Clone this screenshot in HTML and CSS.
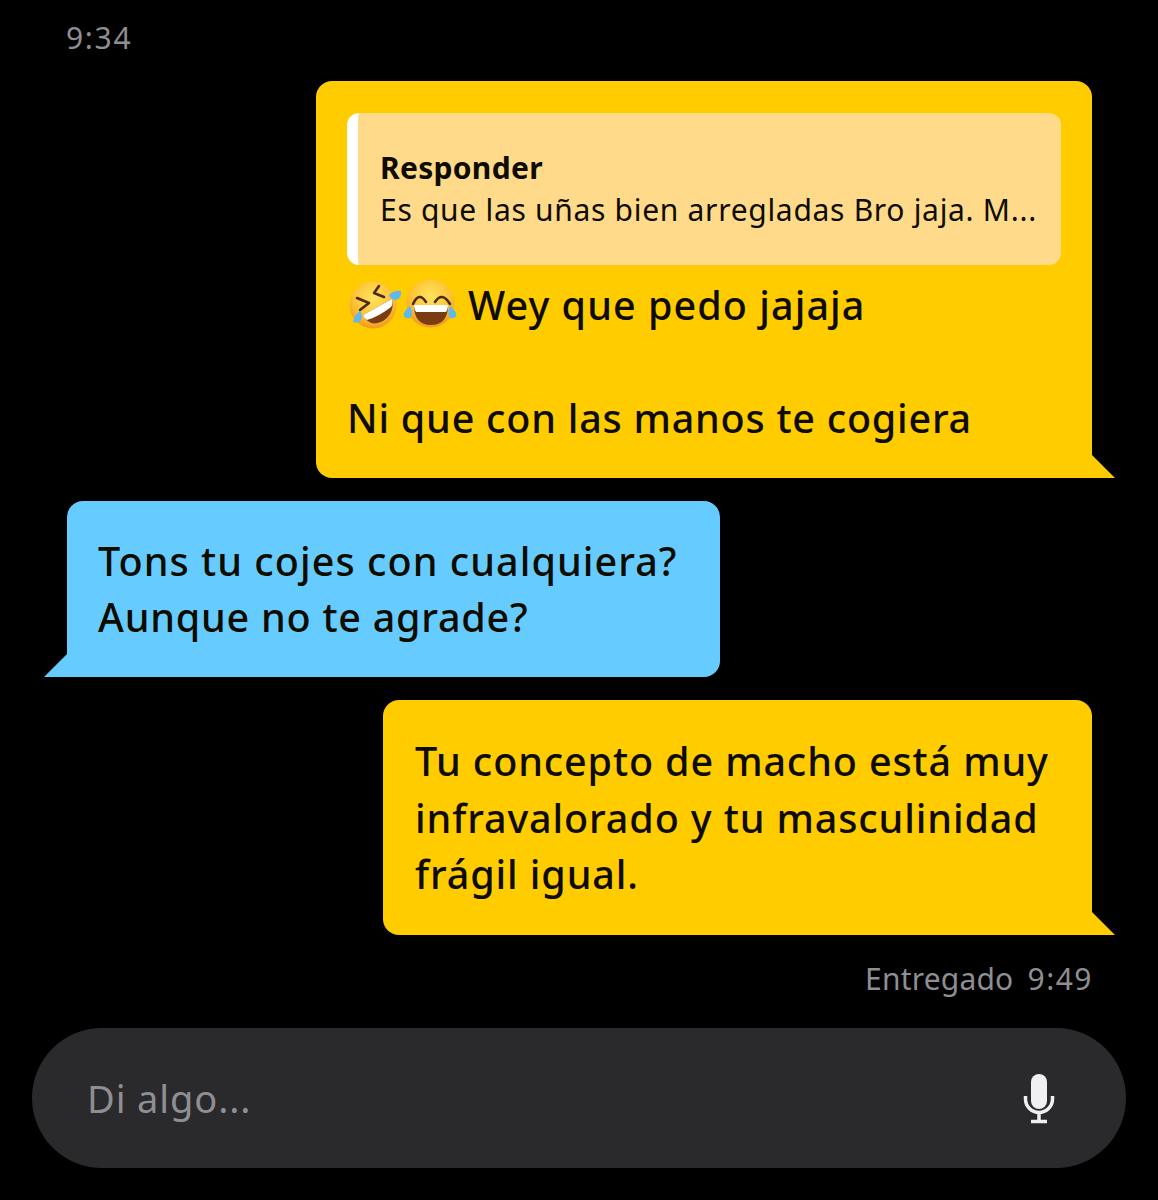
FILE: index.html
```html
<!DOCTYPE html>
<html lang="es">
<head>
    <meta charset="UTF-8">
    <meta name="viewport" content="width=device-width, initial-scale=1.0">
    <title>Chat</title>
    <link rel="stylesheet" href="styles.css">
</head>
<body>
<div id="chat">
    <div class="time-top">9:34</div>

    <div class="bubble mine first">
        <div class="quote">
            <div class="quote-title">Responder</div>
            <div class="quote-text">Es que las uñas bien arregladas Bro jaja. M...</div>
        </div>
        <div class="msg">
            <svg class="emoji" viewBox="0 0 54 54" width="54" height="54">
                <defs>
                    <radialGradient id="face" cx="50%" cy="35%" r="70%">
                        <stop offset="0" stop-color="#ffe45c"/>
                        <stop offset="0.6" stop-color="#fcc236"/>
                        <stop offset="1" stop-color="#ee8f1c"/>
                    </radialGradient>
                </defs>
                <circle cx="25" cy="26" r="23.5" fill="url(#face)"/>
                <path d="M15 36 L44 20 Q47 34 35 42 Q22 49 15 36Z" fill="#7a3d12"/>
                <path d="M15 36 L44 20 Q45 25 43 28 Q30 38 19 41 Q16 39 15 36Z" fill="#fff"/>
                <path d="M9 19 L21 24 L12 31" fill="none" stroke="#4c2a12" stroke-width="2.6" stroke-linecap="round" stroke-linejoin="round"/>
                <path d="M31 7 L26 14 L36 18" fill="none" stroke="#4c2a12" stroke-width="2.6" stroke-linecap="round" stroke-linejoin="round"/>
                <path d="M41 16 Q47 11 53 12 Q54 19 48 21 Q43 21 41 16Z" fill="#5fb8ee"/>
                <path d="M12 32 Q6 36 5 43 Q10 45 13 41 Q15 36 12 32Z" fill="#5fb8ee"/>
            </svg><svg class="emoji" viewBox="0 0 54 54" width="54" height="54">
                <circle cx="27.5" cy="24.5" r="24" fill="url(#face)"/>
                <path d="M11 26 H45 Q45 46 28 46 Q11 46 11 26Z" fill="#7a3d12"/>
                <path d="M11 26 H45 Q45 30 43 33 H13 Q11 30 11 26Z" fill="#fff"/>
                <path d="M10 25 Q16 12 23 23" fill="none" stroke="#4c2a12" stroke-width="2.6" stroke-linecap="round"/>
                <path d="M32 23 Q39 12 47 25" fill="none" stroke="#4c2a12" stroke-width="2.6" stroke-linecap="round"/>
                <path d="M7 27 Q1 32 0.5 36 Q2 40 7 39 Q11 34 7 27Z" fill="#5fb8ee"/>
                <path d="M47 27 Q53 32 53.5 36 Q52 40 47 39 Q44 34 47 27Z" fill="#5fb8ee"/>
            </svg>
            <span class="wide">Wey que pedo jajaja</span><br><br>Ni que con las manos te cogiera
        </div>
    </div>

    <div class="bubble theirs">
        <div class="msg"><span class="wide">Tons tu cojes con cualquiera?</span><br>Aunque no te agrade?</div>
    </div>

    <div class="bubble mine last">
        <div class="msg">Tu concepto de macho está muy<br>infravalorado y tu masculinidad<br>frágil igual.</div>
    </div>

    <div class="status"><span class="word">Entregado</span><span class="digits">9:49</span></div>

    <div class="inputbar">
        <span class="placeholder">Di algo...</span>
        <svg class="mic" viewBox="0 0 32 50" width="32" height="50">
            <rect x="8" y="0" width="16" height="35" rx="8" fill="#f0f0f2"/>
            <path d="M2.5 22v3a13.5 13.5 0 0 0 27 0v-3M16 39v8M8 47.5h16" fill="none" stroke="#f0f0f2" stroke-width="3.5"/>
        </svg>
    </div>
</div>
</body>
</html>
```

FILE: styles.css
```css
body {
    margin: 0;
    padding: 0;
    background-color: black;
    font-family: "Noto Sans", "Open Sans", sans-serif;
}

#chat {
    display: flex;
    flex-direction: column;
    height: 1200px;
    padding: 20px 32px 0 32px;
    box-sizing: border-box;
}

.time-top {
    margin-left: 34px;
    height: 61px;
    font-size: 30px;
    line-height: 36px;
    letter-spacing: 1.7px;
    color: #8e8e93;
}

.bubble {
    position: relative;
    box-sizing: border-box;
    padding: 31.5px 42px 31.5px 31px;
    margin-bottom: 23px;
    border-radius: 16px;
    color: #0e0b00;
}

.mine {
    align-self: flex-end;
    margin-right: 34px;
    background-color: #ffcc00;
    border-bottom-right-radius: 0;
}

.mine::after {
    content: "";
    position: absolute;
    right: -23px;
    bottom: 0;
    border-bottom: 23px solid #ffcc00;
    border-right: 23px solid transparent;
}

.theirs {
    align-self: flex-start;
    margin-left: 35px;
    background-color: #66ccff;
    border-bottom-left-radius: 0;
}

.theirs::after {
    content: "";
    position: absolute;
    left: -23px;
    bottom: 0;
    border-bottom: 23px solid #66ccff;
    border-left: 23px solid transparent;
}

.first {
    width: 776px;
    padding: 32px 31px 31.5px 31px;
}

.last {
    width: 709px;
    margin-bottom: 0;
    padding: 33px 30px 32.5px 32px;
}

.last .msg {
    letter-spacing: 0.87px;
}

.quote {
    box-sizing: border-box;
    height: 152px;
    margin-bottom: 12px;
    padding: 34px 0 0 22px;
    border-left: 11px solid #fff;
    border-radius: 12px;
    background-color: #ffda8a;
}

.quote-title {
    font-size: 30px;
    line-height: 42px;
    font-weight: 700;
    letter-spacing: 0.3px;
}

.quote-text {
    font-size: 30px;
    line-height: 42px;
    letter-spacing: 0.7px;
    white-space: nowrap;
}

.msg {
    font-size: 39.5px;
    line-height: 56.5px;
    font-weight: 500;
    letter-spacing: 0.76px;
    white-space: nowrap;
}

.wide {
    letter-spacing: 1.05px;
}

.emoji {
    vertical-align: -13px;
    margin-left: 1px;
}

.status {
    display: flex;
    justify-content: flex-end;
    gap: 14px;
    height: 93px;
    padding: 26px 33px 0 0;
    box-sizing: border-box;
    font-size: 30px;
    line-height: 36px;
    color: #8e8e93;
}

.word {
    letter-spacing: 0.2px;
}

.digits {
    letter-spacing: 1.5px;
}

.inputbar {
    display: flex;
    align-items: center;
    justify-content: space-between;
    box-sizing: border-box;
    width: 1094px;
    height: 140px;
    padding: 0 71px 0 55px;
    border-radius: 70px;
    background-color: #2a2a2c;
}

.placeholder {
    font-size: 38px;
    letter-spacing: 0.9px;
    color: #8e8e93;
}

.mic {
    margin-top: 1px;
}
```
